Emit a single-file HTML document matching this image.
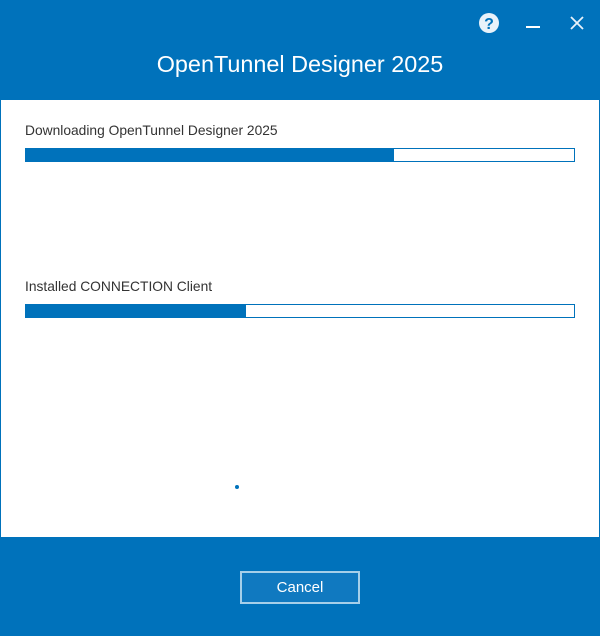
<!DOCTYPE html>
<html><head><style>
body{margin:0;width:600px;height:636px;background:#0072bb;font-family:"Liberation Sans",sans-serif;position:relative;overflow:hidden}
.hdr{position:absolute;left:0;top:0;width:600px;height:100px;background:#0072bb}
.title{position:absolute;top:51px;left:0;width:600px;text-align:center;color:#fff;font-size:23.4px}
.main{position:absolute;left:1px;top:100px;width:598px;height:437px;background:#fff}
.lbl{position:absolute;left:25px;font-size:13.8px;color:#333}
.bar{position:absolute;left:25px;width:548px;height:12px;border:1px solid #0072bb;background:#fff}
.fill{height:100%;background:#0072bb}
.btn{position:absolute;left:240px;top:571px;width:116px;height:29px;border:2px solid #a6cfe9;background:#1079c0;color:#fff;font-size:15px;text-align:center;line-height:29px}
</style></head><body>
<div class="hdr"></div>
<div class="title">OpenTunnel Designer 2025</div>
<svg style="position:absolute;left:478px;top:12px" width="22" height="22" viewBox="0 0 22 22"><circle cx="11" cy="11" r="10" fill="#e8f2fa"/><text x="11" y="17" text-anchor="middle" font-family="Liberation Sans" font-weight="bold" font-size="16" fill="#0072bb">?</text></svg>
<div style="position:absolute;left:526px;top:26px;width:14px;height:2px;background:#fff"></div>
<svg style="position:absolute;left:569px;top:15px" width="16" height="16" viewBox="0 0 16 16"><path d="M2 2L14 14M14 2L2 14" stroke="#e8f2fa" stroke-width="1.8"/></svg>
<div class="main"></div>
<div class="lbl" style="top:123px">Downloading OpenTunnel Designer 2025</div>
<div class="bar" style="top:148px"><div class="fill" style="width:368px"></div></div>
<div class="lbl" style="top:279px">Installed CONNECTION Client</div>
<div class="bar" style="top:304px"><div class="fill" style="width:220px"></div></div>
<div style="position:absolute;left:235px;top:485px;width:4px;height:4px;border-radius:50%;background:#0072bb"></div>
<div class="btn">Cancel</div>
</body></html>
